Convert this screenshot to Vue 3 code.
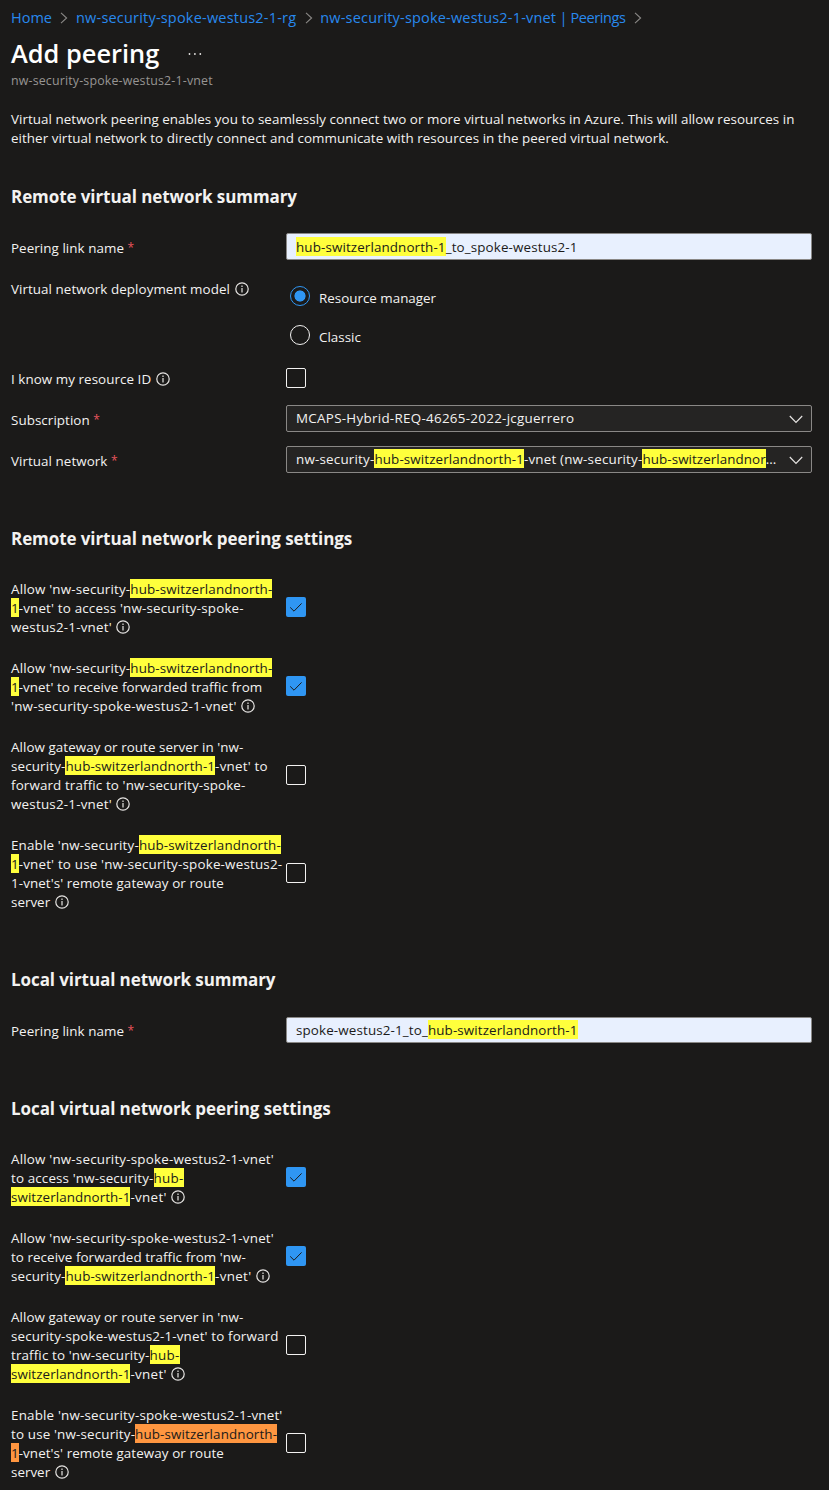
<script setup>
const Y = (t) => ({ t, k: 'find' })
const O = (t) => ({ t, k: 'find current' })
const P = (t) => ({ t })

const track = (t, base = 0.01, hyphen = 1.2) => {
  const hyphens = t.split('-').length - 1
  const quotes = t.split("'").length - 1
  return { letterSpacing: (base + (hyphens * hyphen + quotes * 0.6) / t.length).toFixed(3) + 'px' }
}

const crumbs = [
  { name: 'Home' },
  { name: 'nw-security-spoke-westus2-1-rg' },
  { name: 'nw-security-spoke-westus2-1-vnet', tail: ' | Peerings' },
]

const remoteSettings = [
  { on: true, lines: [[P("Allow 'nw-security-"), Y('hub-switzerlandnorth-')], [Y('1'), P("-vnet' to access 'nw-security-spoke-")], [P("westus2-1-vnet'")]] },
  { on: true, lines: [[P("Allow 'nw-security-"), Y('hub-switzerlandnorth-')], [Y('1'), P("-vnet' to receive forwarded traffic from")], [P("'nw-security-spoke-westus2-1-vnet'")]] },
  { on: false, lines: [[P("Allow gateway or route server in 'nw-")], [P('security-'), Y('hub-switzerlandnorth-1'), P("-vnet' to")], [P("forward traffic to 'nw-security-spoke-")], [P("westus2-1-vnet'")]] },
  { on: false, lines: [[P("Enable 'nw-security-"), Y('hub-switzerlandnorth-')], [Y('1'), P("-vnet' to use 'nw-security-spoke-westus2-")], [P("1-vnet's' remote gateway or route")], [P('server')]] },
]
const localSettings = [
  { on: true, lines: [[P("Allow 'nw-security-spoke-westus2-1-vnet'")], [P("to access 'nw-security-"), Y('hub-')], [Y('switzerlandnorth-1'), P("-vnet'")]] },
  { on: true, lines: [[P("Allow 'nw-security-spoke-westus2-1-vnet'")], [P("to receive forwarded traffic from 'nw-")], [P('security-'), Y('hub-switzerlandnorth-1'), P("-vnet'")]] },
  { on: false, lines: [[P("Allow gateway or route server in 'nw-")], [P("security-spoke-westus2-1-vnet' to forward")], [P("traffic to 'nw-security-"), Y('hub-')], [Y('switzerlandnorth-1'), P("-vnet'")]] },
  { on: false, lines: [[P("Enable 'nw-security-spoke-westus2-1-vnet'")], [P("to use 'nw-security-"), O('hub-switzerlandnorth-')], [O('1'), P("-vnet's' remote gateway or route")], [P('server')]] },
]
const groups = { remote: remoteSettings, local: localSettings }

const remoteLink = [Y('hub-switzerlandnorth-1'), P('_to_spoke-westus2-1')]
const localLink = [P('spoke-westus2-1_to_'), Y('hub-switzerlandnorth-1')]
const vnet = [P('nw-security-'), Y('hub-switzerlandnorth-1'), P('-vnet (nw-security-'), Y('hub-switzerlandnor'), P('...')]
const subscription = 'MCAPS-Hybrid-REQ-46265-2022-jcguerrero'
const subtitle = 'nw-security-spoke-westus2-1-vnet'
</script>

<template>
  <main class="page">
    <nav class="crumbs">
      <template v-for="c in crumbs" :key="c.name">
        <a><span :style="track(c.name, 0)">{{ c.name }}</span><span v-if="c.tail" class="tail">{{ c.tail }}</span></a>
        <svg class="sep" width="8" height="12" viewBox="0 0 8 12"><path d="M1 .8 6.6 6 1 11.2" /></svg>
      </template>
    </nav>
    <div class="title-row">
      <h1>Add peering</h1>
      <svg class="more" width="14" height="4" viewBox="0 0 14 4"><circle cx="1.5" cy="2" r=".9" /><circle cx="6.9" cy="2" r=".9" /><circle cx="12.3" cy="2" r=".9" /></svg>
    </div>
    <div class="subtitle" :style="track(subtitle, 0, 1.05)">{{ subtitle }}</div>
    <p class="intro">
      Virtual network peering enables you to seamlessly connect two or more virtual networks in Azure. This will allow resources in<br />
      either virtual network to directly connect and communicate with resources in the peered virtual network.
    </p>

    <h2>Remote virtual network summary</h2>
    <section class="form">
      <div class="row">
        <label>Peering link name <i class="req">*</i></label>
        <div class="input"><span v-for="(seg, k) in remoteLink" :key="k" :class="seg.k" :style="track(seg.t)">{{ seg.t }}</span></div>
      </div>
      <div class="row tall">
        <label>Virtual network deployment model<svg class="info raised" viewBox="0 0 14 14"><circle cx="7" cy="7" r="6.2" /><path d="M7 6v4.4M7 3.6v1.3" /></svg></label>
        <div class="radios">
          <div class="radio"><span class="dot selected"></span><span class="caption">Resource manager</span></div>
          <div class="radio"><span class="dot"></span><span class="caption">Classic</span></div>
        </div>
      </div>
      <div class="row">
        <label>I know my resource ID<svg class="info" viewBox="0 0 14 14"><circle cx="7" cy="7" r="6.2" /><path d="M7 6v4.4M7 3.6v1.3" /></svg></label>
        <span class="box lowered"></span>
      </div>
      <div class="row">
        <label>Subscription <i class="req">*</i></label>
        <div class="select">
          <span :style="track(subscription, 0.125)">{{ subscription }}</span>
          <svg class="chev" width="14" height="9" viewBox="0 0 14 9"><path d="M.8 1 7 7.4 13.2 1" /></svg>
        </div>
      </div>
      <div class="row">
        <label>Virtual network <i class="req">*</i></label>
        <div class="select">
          <div><span v-for="(seg, k) in vnet" :key="k" :class="seg.k" :style="track(seg.t, 0)">{{ seg.t }}</span></div>
          <svg class="chev" width="14" height="9" viewBox="0 0 14 9"><path d="M.8 1 7 7.4 13.2 1" /></svg>
        </div>
      </div>
    </section>

    <template v-for="(items, name) in groups" :key="name">
      <template v-if="name === 'local'">
        <h2 class="local-head">Local virtual network summary</h2>
        <section class="form local-form">
          <div class="row">
            <label>Peering link name <i class="req">*</i></label>
            <div class="input"><span v-for="(seg, k) in localLink" :key="k" :class="seg.k" :style="track(seg.t)">{{ seg.t }}</span></div>
          </div>
        </section>
      </template>
      <h2 class="settings-head">{{ name === 'local' ? 'Local' : 'Remote' }} virtual network peering settings</h2>
      <section class="settings">
        <div v-for="(s, i) in items" :key="i" class="setting">
          <div class="text">
            <div v-for="(line, j) in s.lines" :key="j" class="line"><span v-for="(seg, k) in line" :key="k" :class="seg.k" :style="track(seg.t)">{{ seg.t }}</span><svg v-if="j === s.lines.length - 1" class="info" viewBox="0 0 14 14"><circle cx="7" cy="7" r="6.2" /><path d="M7 6v4.4M7 3.6v1.3" /></svg></div>
          </div>
          <span class="box" :class="{ checked: s.on }">
            <svg v-if="s.on" width="20" height="20" viewBox="0 0 20 20"><path d="M4.2 10.4 8 14.2 15.6 6.4" /></svg>
          </span>
        </div>
      </section>
    </template>
  </main>
</template>

<style>
html, body { background: #1b1a19; margin: 0; }
</style>

<style scoped>
.page {
  box-sizing: border-box;
  width: 829px;
  height: 1490px;
  overflow: hidden;
  padding: 0 17px 0 11px;
  background: #1b1a19;
  color: #f3f2f1;
  font: 13.4px/19px "Open Sans", "Noto Sans", sans-serif;
  white-space: nowrap;
}
svg { fill: none; flex: none; }
.crumbs { display: flex; align-items: center; height: 35px; font-size: 14.5px; color: #2889ee; }
.crumbs a { letter-spacing: 0; }
.tail { letter-spacing: -0.4px; white-space: pre; }
.sep { margin: 0 7.5px 0 8.5px; stroke: #8a8886; stroke-width: 1.1; }
.title-row { display: flex; align-items: center; height: 36px; }
h1 { margin: 0; font-size: 25.4px; line-height: 34px; font-weight: 600; color: #fff; }
.more { margin: 2px 0 0 29px; fill: #e6e4e2; }
.subtitle { height: 20px; line-height: 20px; font-size: 12.4px; color: #979593; }
.intro { margin: 19px 0 0; letter-spacing: 0.05px; }
h2 { margin: 37px 0 24px; font-size: 17px; line-height: 24px; font-weight: 700; letter-spacing: -0.08px; }
.form { display: flex; flex-direction: column; gap: 14px; }
.row { display: flex; height: 27px; }
.row.tall { height: 76px; }
label { flex: none; box-sizing: border-box; width: 275px; padding-top: 6px; letter-spacing: 0.06px; }
.req { font-style: normal; font-size: 12px; line-height: 10px; color: #e8545c; vertical-align: 1px; }
.input, .select { box-sizing: border-box; flex: 1; height: 27px; border: 1px solid #8a8886; border-radius: 2px; padding: 4px 9px 0; }
.input { background: #e8f0fe; color: #1b1a19; }
.select { display: flex; justify-content: space-between; background: #252423; padding: 3px 8px 0 9px; }
.chev { margin-top: 6px; stroke: #e6e4e2; stroke-width: 1.2; }
.find { padding-top: 1px; background: #ffff3c; color: #1b1a19; }
.current { background: #ff9640; }
.info { width: 14px; height: 14px; margin: 0 0 0 5px; vertical-align: -2px; stroke: #e6e4e2; stroke-width: 1.2; }
.radios { display: flex; flex-direction: column; gap: 19px; padding: 12px 0 0 4px; }
.info.raised { margin-left: 5.5px; vertical-align: -1.5px; }
.radio { display: flex; height: 20px; gap: 9px; }
.caption { padding-top: 3px; }
.dot { box-sizing: border-box; width: 20px; height: 20px; border: 1px solid #f3f2f1; border-radius: 50%; }
.dot.selected { border-color: #2f96f3; background: radial-gradient(circle, #2f96f3 5.2px, transparent 5.9px); }
.box { box-sizing: border-box; flex: none; width: 20px; height: 20px; margin-bottom: 1px; border: 1px solid #f3f2f1; border-radius: 2px; }
.box.lowered { margin-top: 4px; }
.box.checked { display: flex; border: 0; background: #2f96f3; }
.box path { stroke: #1b1a19; stroke-width: 1; }
.settings-head { margin: 54px 0 28px; }
.settings { display: flex; flex-direction: column; gap: 22px; }
.setting { display: flex; align-items: center; }
.text { flex: none; width: 275px; margin: 1px 0 -1px; }
.text .info { margin-left: 4.5px; }
.line { height: 19px; }
.local-head { margin: 57px 0 25px; }
.local-form .row { height: 26px; }
.local-form label { padding-top: 5px; }
.local-form .input { height: 26px; padding-top: 3px; }
</style>
